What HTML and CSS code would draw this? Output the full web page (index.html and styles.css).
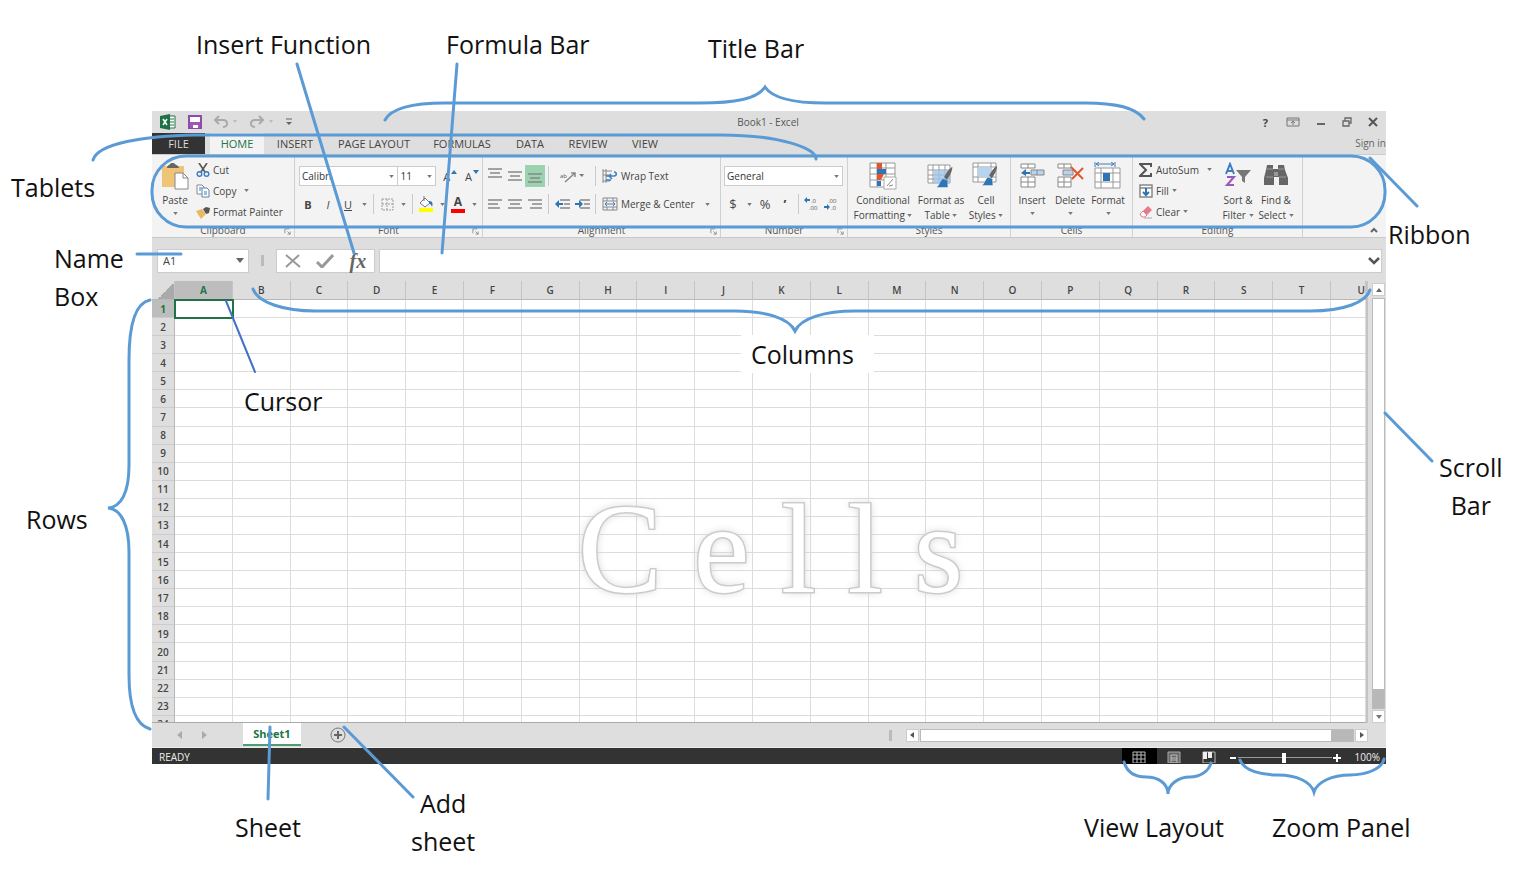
FILE: index.html
```html
<!DOCTYPE html>
<html lang="en">
<head>
<meta charset="utf-8">
<title>Parts of the Excel window</title>
<link rel="stylesheet" href="styles.css">
</head>
<body>
<svg class="defs" aria-hidden="true">
  <symbol id="down" viewBox="0 0 6 4"><path d="M0 0h6L3 4z" fill="#777"/></symbol>
  <symbol id="launch" viewBox="0 0 8 8"><path d="M1 6V1h5M4 4l3 3M7 4v3H4" fill="none" stroke="#888"/></symbol>
  <symbol id="lines" viewBox="0 0 14 10"><path d="M0 1h14M2 5h10M0 9h14" stroke="#888" stroke-width="1.4"/></symbol>
  <symbol id="brush" viewBox="0 0 18 26"><path d="M17 1c-3 1-7 7-9 11l3 3c3-4 6-10 6-14z" fill="#666"/><path d="M7 14c-3 1-3 6-7 9h12c0-3-1-5 0-7z" fill="#2f75b5"/></symbol>
</svg>
<main class="figure">
  <section class="window">
    <header class="titlebar">
      <div class="quick">
        <svg width="16" height="16" viewBox="0 0 16 16"><path d="M8 2h7v12H8z" fill="#fff" stroke="#217346"/><path d="M10 5h4M10 8h4M10 11h4" stroke="#217346"/><path d="M0 2l10-2v16L0 14z" fill="#1e7145"/><path d="M3 5l4 6M7 5l-4 6" stroke="#fff" stroke-width="1.5"/></svg>
        <button aria-label="Save"><svg width="14" height="14" viewBox="0 0 14 14"><path d="M1 1h12v12H1z" fill="#fff" stroke="#8e4bad" stroke-width="2"/><path d="M2 7h10v6H2z" fill="#9b59b6"/><path d="M5 10h5v3H5z" fill="#fff"/></svg></button>
        <button aria-label="Undo"><svg width="24" height="14" viewBox="0 0 24 14"><path d="M5 1L1 5l4 4M1 5h8c5 0 6 7 0 7" fill="none" stroke="#aaa" stroke-width="2"/><path d="M19 5h4l-2 3z" fill="#bbb"/></svg></button>
        <button aria-label="Redo"><svg width="24" height="14" viewBox="0 0 24 14"><path d="M9 1l4 4-4 4M13 5H5c-5 0-6 7 0 7" fill="none" stroke="#aaa" stroke-width="2"/><path d="M19 5h4l-2 3z" fill="#bbb"/></svg></button>
        <button aria-label="Customize toolbar"><svg width="6" height="8" viewBox="0 0 6 8"><path d="M0 1h6" stroke="#666"/><path d="M0 4h6L3 7z" fill="#666"/></svg></button>
      </div>
      <span class="doc">Book1 - Excel</span>
      <div class="controls">
        <button class="help">?</button>
        <button aria-label="Ribbon options"><svg width="14" height="10" viewBox="0 0 14 10"><path d="M1 1h12v8H1zM1 3h12M7 8V4M5 6l2-2 2 2" fill="none" stroke="#777"/></svg></button>
        <button aria-label="Minimize"><svg width="10" height="10" viewBox="0 0 10 10"><path d="M1 7h8" stroke="#666" stroke-width="2"/></svg></button>
        <button aria-label="Restore"><svg width="10" height="10" viewBox="0 0 10 10"><path d="M1 4h6v5H1zM3 4V1h6v5H7" fill="none" stroke="#666" stroke-width="1.3"/></svg></button>
        <button aria-label="Close"><svg width="10" height="10" viewBox="0 0 10 10"><path d="M1 1l8 8M9 1L1 9" stroke="#555" stroke-width="2"/></svg></button>
      </div>
    </header>
    <nav class="tabs">
      <button class="file">FILE</button>
      <button class="active">HOME</button>
      <button class="t-insert">INSERT</button>
      <button class="t-layout">PAGE LAYOUT</button>
      <button class="t-formulas">FORMULAS</button>
      <button class="t-data">DATA</button>
      <button class="t-review">REVIEW</button>
      <button class="t-view">VIEW</button>
      <a class="signin" href="#">Sign in</a>
    </nav>
    <div class="ribbon">
      <section class="group g-clip">
        <div class="body">
          <button class="big paste"><svg width="28" height="28" viewBox="0 0 28 28"><path d="M1 4h22v21H1z" fill="#efc477"/><path d="M6 6c0-3 3-3 4-5h3c1 2 5 2 5 5z" fill="#666"/><path d="M14 11h8l5 5v11H14z" fill="#fff" stroke="#888"/><path d="M22 11v5h5" fill="none" stroke="#888"/></svg><span>Paste</span><svg class="arrow"><use href="#down"/></svg></button>
          <div class="stack">
            <button><svg width="14" height="14" viewBox="0 0 14 14"><path d="M3 0l6 9M11 0L5 9" stroke="#555" stroke-width="1.6"/><circle cx="3.500" cy="11" r="2.300" fill="none" stroke="#3b7dc0" stroke-width="1.400"/><circle cx="10.500" cy="11" r="2.300" fill="none" stroke="#3b7dc0" stroke-width="1.400"/></svg>Cut</button>
            <button><svg width="14" height="14" viewBox="0 0 14 14"><path d="M1 1h5l2 2v7H1z" fill="#fff" stroke="#888"/><path d="M6 4h5l2 2v7H6z" fill="#fff" stroke="#5a84ae"/><path d="M3 4h3M3 6h2M8 8h3M8 10h3" stroke="#3b7dc0"/></svg>Copy<svg class="arrow far"><use href="#down"/></svg></button>
            <button><svg width="14" height="14" viewBox="0 0 14 14"><path d="M7 4l3-2 4 1-1 5-3 1z" fill="#555"/><path d="M0 6l6-2 4 5-5 5-2-3z" fill="#eab765"/></svg>Format Painter</button>
          </div>
        </div>
        <footer>Clipboard<svg class="launch"><use href="#launch"/></svg></footer>
      </section>
      <section class="group g-font">
        <div class="body rows">
          <div class="row">
            <span class="pick name"><select aria-label="Font"><option>Calibri</option></select><svg class="arrow"><use href="#down"/></svg></span><span class="pick size"><select aria-label="Font size"><option>11</option></select><svg class="arrow"><use href="#down"/></svg></span>
            <button class="tool grow">A<svg width="6" height="4" viewBox="0 0 6 4"><path d="M0 4l3-4 3 4z" fill="#2f75b5"/></svg></button>
            <button class="tool grow">A<svg width="6" height="4" viewBox="0 0 6 4"><path d="M0 0h6L3 4z" fill="#2f75b5"/></svg></button>
          </div>
          <div class="row">
            <button class="tool"><b>B</b></button><button class="tool"><i>I</i></button><button class="tool"><u>U</u></button><button class="drop" aria-label="Underline styles"><svg class="arrow"><use href="#down"/></svg></button><span class="sep"></span>
            <button class="tool" aria-label="Borders"><svg width="13" height="13" viewBox="0 0 13 13"><path d="M1 1h11v11H1zM6 1v11M1 6h11" fill="none" stroke="#999" stroke-dasharray="2 1"/></svg></button><button class="drop" aria-label="Border styles"><svg class="arrow"><use href="#down"/></svg></button><span class="sep"></span>
            <button class="tool" aria-label="Fill color"><svg width="16" height="16" viewBox="0 0 16 16"><path d="M2 7l5-5 5 5-5 4z" fill="#fff" stroke="#777"/><path d="M6 0v5" stroke="#777"/><path d="M11 5c4 0 4 3 3 6-1-3-2-3-3-4z" fill="#2f75b5"/><path d="M1 12h14v4H1z" fill="#ff0"/></svg></button><button class="drop" aria-label="Fill colors"><svg class="arrow"><use href="#down"/></svg></button>
            <button class="tool color">A</button><button class="drop" aria-label="Font colors"><svg class="arrow"><use href="#down"/></svg></button>
          </div>
        </div>
        <footer>Font<svg class="launch"><use href="#launch"/></svg></footer>
      </section>
      <section class="group g-align">
        <div class="body rows">
          <div class="row">
            <button class="tool top" aria-label="Top align"><svg width="14" height="10"><use href="#lines"/></svg></button><button class="tool" aria-label="Middle align"><svg width="14" height="10"><use href="#lines"/></svg></button><button class="tool on" aria-label="Bottom align"><svg width="14" height="10"><use href="#lines"/></svg></button><span class="sep"></span>
            <button class="tool wide" aria-label="Orientation"><svg width="24" height="14" viewBox="0 0 24 14"><path d="M5 13L15 4M11 4h4v4" fill="none" stroke="#888" stroke-width="1.500"/><text x="0" y="9" class="tiny">ab</text><path d="M19 5h5l-2 3z" fill="#777"/></svg></button><span class="sep"></span>
            <button class="label"><svg width="16" height="14" viewBox="0 0 16 14"><path d="M1 0v14M4 0v14M1 2h9M1 6h6M1 12h7" stroke="#888" fill="none"/><path d="M4 7h8c3 0 3-4 0-4M9 5L7 7l3 3M4 11h5" fill="none" stroke="#3b7dc0" stroke-width="1.500"/></svg>Wrap Text</button>
          </div>
          <div class="row">
            <button class="tool" aria-label="Align left"><svg width="14" height="10" viewBox="0 0 14 10"><path d="M0 1h14M0 5h10M0 9h12" stroke="#888" stroke-width="1.400"/></svg></button><button class="tool" aria-label="Center"><svg width="14" height="10"><use href="#lines"/></svg></button><button class="tool" aria-label="Align right"><svg width="14" height="10" viewBox="0 0 14 10"><path d="M0 1h14M4 5h10M2 9h12" stroke="#888" stroke-width="1.400"/></svg></button><span class="sep"></span>
            <button class="tool" aria-label="Decrease indent"><svg width="15" height="10" viewBox="0 0 15 10"><path d="M5 1h10M9 5h6M5 9h10" stroke="#888" stroke-width="1.400"/><path d="M0 5l4-4v3h4v2H4v3z" fill="#2f75b5"/></svg></button><button class="tool" aria-label="Increase indent"><svg width="15" height="10" viewBox="0 0 15 10"><path d="M5 1h10M9 5h6M5 9h10" stroke="#888" stroke-width="1.400"/><path d="M8 5L4 1v3H0v2h4v3z" fill="#2f75b5"/></svg></button><span class="sep"></span>
            <button class="label"><svg width="16" height="14" viewBox="0 0 16 14"><path d="M1 1h14v12H1zM1 4h14M1 10h14M5 1v3M11 1v3M5 10v3M11 10v3" fill="none" stroke="#888"/><path d="M3 7h10M5 5L3 7l2 2M11 5l2 2-2 2" fill="none" stroke="#3b7dc0"/></svg>Merge &amp; Center<svg class="arrow far"><use href="#down"/></svg></button>
          </div>
        </div>
        <footer>Alignment<svg class="launch"><use href="#launch"/></svg></footer>
      </section>
      <section class="group g-num">
        <div class="body rows">
          <div class="row"><span class="pick format"><select aria-label="Number format"><option>General</option></select><svg class="arrow"><use href="#down"/></svg></span></div>
          <div class="row">
            <button class="tool sign">$</button><button class="drop" aria-label="Currencies"><svg class="arrow"><use href="#down"/></svg></button><button class="tool sign">%</button><button class="tool sign"><b>’</b></button><span class="sep"></span>
            <button class="tool" aria-label="Increase decimal"><svg width="18" height="18" viewBox="0 0 18 18"><path d="M1 5l3-3v2h3v2H4v2z" fill="#2f75b5"/><text x="8" y="8" class="tiny">.0</text><text x="6" y="15" class="tiny">.00</text></svg></button><button class="tool" aria-label="Decrease decimal"><svg width="18" height="18" viewBox="0 0 18 18"><text x="5" y="8" class="tiny">.00</text><path d="M7 12L4 9v2H1v2h3v2z" fill="#2f75b5"/><text x="8" y="15" class="tiny">.0</text></svg></button>
          </div>
        </div>
        <footer>Number<svg class="launch"><use href="#launch"/></svg></footer>
      </section>
      <section class="group g-style">
        <div class="body">
          <button class="big b-cond"><svg width="28" height="28" viewBox="0 0 28 28"><path d="M1 1h25v24H1zM8 1v24M17 1v24M1 6h25M1 12h25M1 18h25" fill="#fff" stroke="#999"/><path d="M8 1h5v6H8zM8 12h7l-3 6H8z" fill="#e2552d"/><path d="M8 7h9v5H8zM8 19h4v5H8z" fill="#2f75b5"/><path d="M15 15h12v12H15z" fill="#fff" stroke="#aaa"/><path d="M18 24l6-7M20 24l4-1" stroke="#888"/></svg><span>Conditional<br>Formatting <svg class="arrow"><use href="#down"/></svg></span></button>
          <button class="big b-table"><svg width="28" height="28" viewBox="0 0 28 28"><path d="M1 3h22v18H1zM1 8h22M1 13h22M1 17h22M6 3v18M12 3v18M18 3v18" fill="#fff" stroke="#999"/><path d="M7 8h16v13H7z" fill="#9fc3e8" opacity=".8"/><use href="#brush" x="9" y="4" width="18" height="24"/></svg><span>Format as<br>Table <svg class="arrow"><use href="#down"/></svg></span></button>
          <button class="big b-cell"><svg width="28" height="28" viewBox="0 0 28 28"><path d="M1 1h23v19H1zM1 5h23M1 15h23M6 1v19M19 1v19" fill="#fff" stroke="#999"/><path d="M6 5h13v10H6z" fill="#b8d3ee"/><use href="#brush" x="9" y="3" width="18" height="23"/></svg><span>Cell<br>Styles <svg class="arrow"><use href="#down"/></svg></span></button>
        </div>
        <footer>Styles</footer>
      </section>
      <section class="group g-cells">
        <div class="body">
          <button class="big b-ins"><svg width="28" height="28" viewBox="0 0 28 28"><path d="M3 2h14v4H3zM10 2v4M3 15h14v10H3zM10 15v10M3 20h14" fill="#fff" stroke="#888"/><path d="M13 8h13v5H13z" fill="#b8d3ee" stroke="#888"/><path d="M19 8v5" stroke="#888"/><path d="M3 11l5-4v3h4v2H8v2z" fill="#2f75b5"/></svg><span>Insert</span><svg class="arrow"><use href="#down"/></svg></button>
          <button class="big b-del"><svg width="28" height="28" viewBox="0 0 28 28"><path d="M2 2h13v4H2zM8 2v4M2 15h13v10H2zM8 15v10M2 20h13" fill="#fff" stroke="#888"/><path d="M7 8h10v5H7z" fill="#b8d3ee" stroke="#888"/><path d="M15 5l12 12M27 6L16 17" stroke="#e2552d" stroke-width="2"/></svg><span>Delete</span><svg class="arrow"><use href="#down"/></svg></button>
          <button class="big b-fmt"><svg width="28" height="28" viewBox="0 0 28 28"><path d="M1 0v5M21 0v5M2 2h18M5 0L2 2l3 2M17 0l3 2-3 2" fill="none" stroke="#3b7dc0"/><path d="M1 6h25v20H1zM1 11h25M1 20h25M7 6v20M19 6v20" fill="#fff" stroke="#999"/><path d="M9 11h7v8H9z" fill="#2f75b5"/></svg><span>Format</span><svg class="arrow"><use href="#down"/></svg></button>
        </div>
        <footer>Cells</footer>
      </section>
      <section class="group g-edit">
        <div class="body">
          <div class="stack">
            <button><svg width="14" height="14" viewBox="0 0 14 14"><path d="M12 4V1H1l6 6-6 6h11v-3" fill="none" stroke="#555" stroke-width="2"/></svg>AutoSum<svg class="arrow far"><use href="#down"/></svg></button>
            <button><svg width="14" height="14" viewBox="0 0 14 14"><path d="M1 1h12v12H1zM1 4h12" fill="#fff" stroke="#888" stroke-width="1.500"/><path d="M7 4v7M4 8l3 3 3-3" fill="none" stroke="#2f75b5" stroke-width="2"/></svg>Fill<svg class="arrow"><use href="#down"/></svg></button>
            <button><svg width="14" height="14" viewBox="0 0 14 14"><path d="M1 9l8-8 4 4-7 7H3z" fill="#e8798a"/><path d="M1 9l3-3 4 4-2 2H3z" fill="#fff" stroke="#e8798a"/><path d="M5 13h8" stroke="#aaa"/></svg>Clear<svg class="arrow"><use href="#down"/></svg></button>
          </div>
          <button class="big b-sort"><svg width="28" height="28" viewBox="0 0 28 28"><path d="M2 12L6 2l4 10M3 9h6" fill="none" stroke="#3b7dc0" stroke-width="2"/><path d="M3 15h7l-7 8h7" fill="none" stroke="#9b59b6" stroke-width="2"/><path d="M12 8h15l-6 7v6l-3-2v-4z" fill="#777"/></svg><span>Sort &amp;<br>Filter <svg class="arrow"><use href="#down"/></svg></span></button>
          <button class="big b-find"><svg width="28" height="28" viewBox="0 0 28 28"><path d="M5 3h6v4h5V3h6l1 5 3 8v7h-9v-8h-5v8H2v-7l2-8z" fill="#666"/><path d="M12 10h4v4h-4z" fill="#999"/><path d="M4 15h7M17 15h7M5 7h6M16 7h6" stroke="#999"/></svg><span>Find &amp;<br>Select <svg class="arrow"><use href="#down"/></svg></span></button>
        </div>
        <footer>Editing</footer>
      </section>
      <button class="collapse" aria-label="Collapse ribbon"><svg width="8" height="6" viewBox="0 0 8 6"><path d="M1 5l3-3 3 3" fill="none" stroke="#666" stroke-width="2"/></svg></button>
    </div>
    <div class="formula">
      <div class="namebox"><input aria-label="Name box" value="A1"><svg width="8" height="5" viewBox="0 0 8 5"><path d="M0 0h8L4 5z" fill="#666"/></svg></div>
      <span class="grip"></span>
      <div class="fx">
        <button aria-label="Cancel"><svg width="16" height="14" viewBox="0 0 16 14"><path d="M1 1l14 12M14 1L1 13" stroke="#999" stroke-width="2"/></svg></button>
        <button aria-label="Enter"><svg width="18" height="14" viewBox="0 0 18 14"><path d="M1 8l5 5L17 1" fill="none" stroke="#999" stroke-width="3"/></svg></button>
        <button class="fn">fx</button>
      </div>
      <div class="entry"><input aria-label="Formula bar"><svg width="12" height="8" viewBox="0 0 12 8"><path d="M1 1l5 5 5-5" fill="none" stroke="#555" stroke-width="2.500"/></svg></div>
    </div>
    <div class="sheet">
      <div class="cells">
        <table>
          <colgroup id="cols"></colgroup>
          <thead><tr id="letters"></tr></thead>
          <tbody id="rows"></tbody>
        </table>
      </div>
      <div class="vscroll">
        <button aria-label="Scroll up"><svg width="6" height="4" viewBox="0 0 6 4"><path d="M0 4l3-4 3 4z" fill="#666"/></svg></button>
        <div class="track"><span class="thumb"></span></div>
        <button aria-label="Scroll down"><svg width="6" height="4"><use href="#down"/></svg></button>
      </div>
    </div>
    <div class="sheetbar">
      <button class="nav" aria-label="Previous sheet"><svg width="5" height="8" viewBox="0 0 5 8"><path d="M5 0v8L0 4z" fill="#aaa"/></svg></button>
      <button class="nav" aria-label="Next sheet"><svg width="5" height="8" viewBox="0 0 5 8"><path d="M0 0v8l5-4z" fill="#aaa"/></svg></button>
      <button class="sheettab">Sheet1</button>
      <button class="add" aria-label="Add sheet"><svg width="16" height="16" viewBox="0 0 16 16"><circle cx="8" cy="8" r="7" fill="none" stroke="#777"/><path d="M8 4v8M4 8h8" stroke="#666" stroke-width="2"/></svg></button>
      <span class="grip"></span>
      <div class="hscroll">
        <button aria-label="Scroll left"><svg width="4" height="6" viewBox="0 0 4 6"><path d="M4 0v6L0 3z" fill="#555"/></svg></button>
        <div class="track"><span class="thumb"></span></div>
        <button aria-label="Scroll right"><svg width="4" height="6" viewBox="0 0 4 6"><path d="M0 0v6l4-3z" fill="#555"/></svg></button>
      </div>
    </div>
    <footer class="status">
      <span class="ready">READY</span>
      <button class="view current" aria-label="Normal view"><svg width="14" height="12" viewBox="0 0 14 12"><path d="M1 1h12v11H1zM5 1v11M9 1v11M1 4h12M1 8h12" fill="none" stroke="#bbb"/></svg></button>
      <button class="view" aria-label="Page layout view"><svg width="14" height="12" viewBox="0 0 14 12"><path d="M1 1h12v11H1z" fill="#666" stroke="#aaa"/><path d="M4 4h6v8H4zM4 7h6M4 9h6" fill="none" stroke="#bbb"/></svg></button>
      <button class="view" aria-label="Page break view"><svg width="14" height="12" viewBox="0 0 14 12"><path d="M1 1h12v11H1z" fill="#333" stroke="#bbb"/><path d="M1 1h4v7H1zM6 1h4v6H6z" fill="#eee"/></svg></button>
      <div class="zoom">
        <button aria-label="Zoom out"><svg width="8" height="8" viewBox="0 0 8 8"><path d="M1 4h6" stroke="#fff" stroke-width="2"/></svg></button>
        <input type="range" aria-label="Zoom" min="0" max="100" value="49">
        <button aria-label="Zoom in"><svg width="8" height="8" viewBox="0 0 8 8"><path d="M0 4h8M4 0v8" stroke="#fff" stroke-width="2"/></svg></button>
        <span class="percent">100%</span>
      </div>
    </footer>
  </section>
  <div class="wordart">C e l l s</div>
  <div class="note n-columns">Columns</div>
  <svg class="marks" viewBox="0 0 1533 881" preserveAspectRatio="none" aria-hidden="true">
    <path d="M385 120C392 107 415 103 445 103H700C735 103 757 99 765 87C773 99 795 103 825 103H1085C1115 103 1135 107 1144 119"/>
    <path d="M93 160C98 143 145 136 195 135H720C780 135 816 148 816 159"/>
    <rect x="152" y="156" width="1233" height="71" rx="34"/>
    <path d="M253 289C258 303 285 311 315 311H735C765 311 789 318 795 331C801 318 825 311 855 311H1310C1345 311 1366 302 1370 290"/>
    <path d="M150 300C135 303 129 325 129 360V465C129 493 121 507 108 508C121 509 129 525 129 552V675C129 707 136 725 150 729"/>
    <path d="M1124 762C1127 772 1135 777 1146 777C1159 777 1168 784 1168 794C1168 784 1179 777 1190 777C1200 777 1209 771 1211 763"/>
    <path d="M1240 760C1244 771 1262 775 1278 775C1297 775 1311 782 1314 792C1317 782 1332 775 1350 775C1366 775 1382 769 1384 759"/>
    <path d="M297 64L354 253M457 64L442 253M1370 158L1417 206M1385 413L1432 461M137 254H181M270 727L268 799M344 727L413 797"/>
    <path class="thin" d="M226 301L255 372"/>
  </svg>
  <div class="note n-insert">Insert Function</div>
  <div class="note n-formula">Formula Bar</div>
  <div class="note n-title">Title Bar</div>
  <div class="note n-tablets">Tablets</div>
  <div class="note n-name">Name<br>Box</div>
  <div class="note n-rows">Rows</div>
  <div class="note n-cursor">Cursor</div>
  <div class="note n-ribbon">Ribbon</div>
  <div class="note n-scroll">Scroll<br>Bar</div>
  <div class="note n-sheet">Sheet</div>
  <div class="note n-add">Add<br>sheet</div>
  <div class="note n-view">View Layout</div>
  <div class="note n-zoom">Zoom Panel</div>
</main>
<script src="grid.js"></script>
</body>
</html>
```
FILE: grid.js
```js
const letters = 'ABCDEFGHIJKLMNOPQRSTU'.split('');
document.getElementById('cols').innerHTML =
  '<col class="c-head">' + letters.map(l => l === 'U' ? '<col class="c-last">' : '<col>').join('');
document.getElementById('letters').innerHTML =
  '<th class="corner"></th>' + letters.map(l => `<th scope="col">${l}</th>`).join('');
let html = '';
for (let r = 1; r <= 24; r++) {
  html += `<tr><th scope="row">${r}</th>${letters.map(() => '<td></td>').join('')}</tr>`;
}
document.getElementById('rows').innerHTML = html;
```
FILE: styles.css
```css
* { box-sizing: border-box; }
body { margin: 0; background: #fff; font-family: "Open Sans", "Liberation Sans", sans-serif; font-size: 10px; color: #444; }
button, input, select { font: inherit; color: inherit; border: 0; padding: 0; margin: 0; background: none; border-radius: 0; }
button { display: flex; align-items: center; justify-content: center; white-space: nowrap; }
svg { flex: none; }
.defs { position: absolute; width: 0; height: 0; }
.arrow { width: 5px; height: 3px; }
.launch { width: 7px; height: 7px; }
.tiny { font-size: 6px; fill: #555; }

.figure { position: relative; padding: 111px 147px 117px 152px; }
.window { background: #dedede; overflow: hidden; }

.titlebar { display: flex; align-items: center; height: 22px; }
.quick, .controls { flex: 1; display: flex; align-items: center; }
.quick { padding-left: 8px; gap: 12px; }
.doc { color: #555; padding-right: 2px; }
.controls { justify-content: flex-end; gap: 16px; padding-right: 8px; }
.help { font-weight: 700; font-size: 11px; margin-right: 2px; }

.tabs { display: flex; height: 22px; font-size: 11px; border-bottom: 1px solid #ccc; }
.file { width: 53px; background: #333; color: #ddd; margin-right: 5px; }
.active { width: 54px; background: #f3f3f3; color: #217346; }
.t-insert { width: 62px; }
.t-layout { width: 96px; }
.t-formulas { width: 80px; }
.t-data { width: 56px; }
.t-review { width: 60px; }
.t-view { width: 54px; }
.signin { margin-left: auto; color: #666; font-size: 10px; line-height: 20px; text-decoration: none; }

.ribbon { display: flex; height: 83px; background: #f3f3f3; border-bottom: 1px solid #c8c8c8; }
.group { display: flex; flex-direction: column; border-right: 1px solid #d0d0d0; }
.body { display: flex; height: 70px; padding: 4px 0 0 4px; }
.group footer { position: relative; line-height: 14px; text-align: center; color: #555; }
.group .launch { position: absolute; right: 3px; bottom: 2px; }
.g-clip { width: 143px; }
.g-font { width: 188px; }
.g-align { width: 238px; }
.g-num { width: 127px; }
.g-style { width: 163px; }
.g-cells { width: 122px; }
.g-edit { width: 170px; }
.rows { flex-direction: column; gap: 8px; padding: 11px 0 0 4px; }
.g-align .rows, .g-num .rows { padding-left: 3px; }
.row { display: flex; align-items: center; height: 20px; gap: 2px; }
.tool { width: 18px; height: 20px; font-size: 11px; }
.drop { width: 10px; height: 20px; }
.wide { width: 38px; }
.sep { width: 1px; height: 20px; margin: 0 2px; background: #ccc; }
.top { align-items: flex-start; padding-top: 2px; }
.on { align-items: flex-end; padding-bottom: 3px; background: #9bd3b1; outline: 1px solid #9bd3b1; }
.grow { align-items: center; gap: 1px; width: 20px; }
.grow svg { margin-bottom: 8px; }
.color { height: 18px; border-bottom: 4px solid #f00; font-weight: 700; font-size: 12px; line-height: 12px; width: 14px; margin: 0 2px; }
.sign { font-size: 13px; }
.label { gap: 3px; margin-left: 2px; }
.label .far { margin-left: 7px; }
.pick { display: flex; align-items: center; height: 20px; padding: 0 3px 0 2px; background: #fff; border: 1px solid #ccc; }
.pick select { flex: 1; min-width: 0; appearance: none; color: #333; }
.name { width: 100px; margin-right: -3px; }
.size { width: 39px; margin-right: 2px; }
.format { width: 119px; }

.stack { display: flex; flex-direction: column; }
.stack button { height: 21px; gap: 3px; justify-content: flex-start; }
.stack .far { margin-left: 5px; }
.big { flex-direction: column; justify-content: flex-start; padding-top: 3px; line-height: 15px; }
.big > svg:first-child { margin-bottom: 3px; }
.big > .arrow { margin-top: 4px; }
.big span .arrow { vertical-align: 2px; }
.paste { width: 38px; margin-right: 2px; }
.b-cond { width: 62px; }
.b-table { width: 54px; }
.b-cell { width: 36px; }
.g-cells .body { padding-left: 2px; }
.b-ins { width: 38px; }
.b-del, .b-fmt, .b-find { width: 38px; }
.g-edit .body { padding-left: 6px; }
.g-edit .stack { width: 80px; }
.b-sort { width: 38px; }
.collapse { margin: auto 8px 4px auto; }

.formula { display: flex; align-items: center; height: 43px; padding: 2px 4px 0 5px; }
.namebox, .fx, .entry { display: flex; align-items: center; height: 24px; background: #fff; border: 1px solid #ccc; }
.namebox { width: 92px; padding: 0 4px 0 5px; font-size: 11px; }
.namebox input, .entry input { flex: 1; min-width: 0; }
.grip { width: 3px; height: 11px; background: #bbb; }
.formula .grip { margin: 0 12px; }
.fx { width: 99px; justify-content: space-around; margin-right: 4px; }
.fn { font: italic 700 20px/22px "Liberation Serif", serif; color: #666; }
.entry { flex: 1; padding-right: 1px; }

.sheet { display: flex; height: 442px; }
.cells { flex: 1; min-width: 0; overflow: hidden; background: #fff; border-bottom: 1px solid #aaa; }
table { width: 100%; height: 453px; table-layout: fixed; border-collapse: separate; border-spacing: 0; }
.c-head { width: 23px; }
.c-last { width: 35px; }
th, td { padding: 0; height: 18px; border-right: 1px solid #dcdcdc; border-bottom: 1px solid #dcdcdc; }
th { font-size: 10px; font-weight: 600; line-height: 16px; background: #dedede; color: #444; }
thead th { height: 19px; line-height: 18px; border-right-color: #c4c4c4; border-bottom-color: #b8b8b8; }
thead th:last-child { text-align: right; }
tbody th { border-right-color: #b8b8b8; border-bottom-color: #ccc; }
.corner { background: linear-gradient(135deg, #dedede 60%, #aaa 60%); }
thead th:nth-child(2), tbody tr:first-child th { background: #bdbdbd; color: #217346; font-weight: 700; }
tbody tr:first-child td:nth-child(2) { outline: 2px solid #217346; outline-offset: -1px; }

.vscroll { display: flex; flex-direction: column; width: 20px; padding: 2px 3px 0 4px; border-left: 2px solid #c4c4c4; }
.vscroll button, .hscroll button { width: 13px; height: 13px; background: #fff; border: 1px solid #ccc; }
.vscroll .track { flex: 1; display: flex; align-items: flex-end; width: 13px; background: #fff; border: 1px solid #bbb; margin: 2px 0 1px; }
.vscroll .thumb { width: 100%; height: 19px; background: #b8b8b8; }

.sheetbar { display: flex; align-items: center; height: 25px; padding-right: 18px; border-bottom: 1px solid #eee; }
.nav { width: 25px; }
.nav:first-child { margin-left: 15px; }
.sheettab { width: 58px; height: 23px; margin: 0 29px 2px 26px; background: #fff; color: #217346; font-weight: 700; font-size: 11px; border-bottom: 2px solid #4f9d73; }
.sheetbar .grip { margin-left: auto; margin-right: 14px; }
.hscroll { display: flex; width: 38%; height: 13px; gap: 1px; }
.hscroll .track { flex: 1; display: flex; justify-content: flex-end; background: #fff; border: 1px solid #bbb; }
.hscroll .thumb { width: 22px; height: 100%; background: #b8b8b8; }

.status { display: flex; align-items: center; height: 16px; background: #333; color: #eee; }
.ready { margin: 3px auto 0 7px; line-height: 13px; }
.view { width: 35px; height: 16px; padding-top: 2px; }
.current { background: #000; }
.zoom { display: flex; align-items: center; padding: 3px 6px 0 2px; }
.zoom input { appearance: none; width: 94px; height: 12px; margin: 0 1px; background: linear-gradient(#999, #999) center / 100% 1px no-repeat; }
.zoom input::-webkit-slider-thumb { appearance: none; width: 4px; height: 10px; background: #fff; }
.percent { margin-left: 14px; line-height: 13px; }

.marks { position: absolute; inset: 0; width: 100%; height: 100%; fill: none; stroke: #5b9bd5; stroke-width: 3; stroke-linecap: round; pointer-events: none; }
.marks .thin { stroke: #4472c4; stroke-width: 2; }
.wordart { position: absolute; left: 578px; top: 477px; font: 126px/146px "Liberation Serif", serif; color: #fff; white-space: nowrap; -webkit-text-stroke: 3px #ccc; paint-order: stroke fill; text-shadow: 0 0 8px #ccc; pointer-events: none; }
.note { position: absolute; font-size: 25px; line-height: 38px; color: #111; white-space: nowrap; }
.n-insert { left: 196px; top: 25px; }
.n-formula { left: 446px; top: 25px; }
.n-title { left: 708px; top: 29px; }
.n-tablets { left: 11px; top: 168px; }
.n-name { left: 54px; top: 239px; }
.n-rows { left: 26px; top: 500px; }
.n-cursor { left: 244px; top: 382px; }
.n-columns { left: 741px; top: 335px; padding: 0 20px 0 10px; background: #fff; }
.n-ribbon { left: 1388px; top: 215px; }
.n-scroll { left: 1439px; top: 448px; text-align: center; }
.n-sheet { left: 235px; top: 808px; }
.n-add { left: 411px; top: 784px; text-align: center; }
.n-view { left: 1084px; top: 808px; }
.n-zoom { left: 1272px; top: 808px; }
```
